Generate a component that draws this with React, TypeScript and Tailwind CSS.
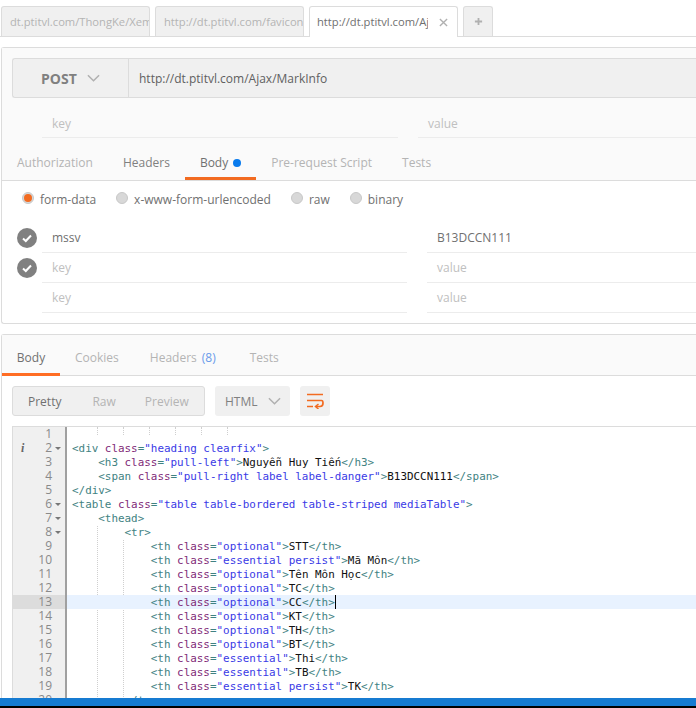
type Seg = [string, string];
const TAG = "text-[#3f8282]";
const ATTR = "text-[#7f2a78]";
const STR = "text-[#3a3ae6]";
const TXT = "text-[#111111]";

function th(cls: string, body: string): Seg[] {
  return [
    ["            ", TXT],
    ["<th", TAG],
    [" ", TXT],
    ["class", ATTR],
    ["=", TAG],
    [`"${cls}"`, STR],
    [">", TAG],
    [body, TXT],
    ["</th>", TAG],
  ];
}

const lines: Seg[][] = [
  [],
  [["<div", TAG], [" ", TXT], ["class", ATTR], ["=", TAG], ['"heading clearfix"', STR], [">", TAG]],
  [["    ", TXT], ["<h3", TAG], [" ", TXT], ["class", ATTR], ["=", TAG], ['"pull-left"', STR], [">", TAG], ["Nguyễn Huy Tiến", TXT], ["</h3>", TAG]],
  [["    ", TXT], ["<span", TAG], [" ", TXT], ["class", ATTR], ["=", TAG], ['"pull-right label label-danger"', STR], [">", TAG], ["B13DCCN111", TXT], ["</span>", TAG]],
  [["</div>", TAG]],
  [["<table", TAG], [" ", TXT], ["class", ATTR], ["=", TAG], ['"table table-bordered table-striped mediaTable"', STR], [">", TAG]],
  [["    ", TXT], ["<thead>", TAG]],
  [["        ", TXT], ["<tr>", TAG]],
  th("optional", "STT"),
  th("essential persist", "Mã Môn"),
  th("optional", "Tên Môn Học"),
  th("optional", "TC"),
  th("optional", "CC"),
  th("optional", "KT"),
  th("optional", "TH"),
  th("optional", "BT"),
  th("essential", "Thi"),
  th("essential", "TB"),
  th("essential persist", "TK"),
  [["        ", TXT], ["</tr>", TAG]],
];

const fold = new Set([2, 6, 7, 8]);

function Check() {
  return (
    <svg viewBox="0 0 20 20" className="w-5 h-5 shrink-0">
      <circle cx="10" cy="10" r="10" fill="#808080" />
      <path d="M6 10.5 L8.8 13 L14 7.5" fill="none" stroke="#fff" strokeWidth="2" />
    </svg>
  );
}

function Chevron({ color }: { color: string }) {
  return (
    <svg viewBox="0 0 14 8" className="w-[13px] h-[8px]">
      <path d="M1 1 L7 7 L13 1" fill="none" stroke={color} strokeWidth="1.6" />
    </svg>
  );
}

function KvRow({ k, v, filled, check }: { k: string; v: string; filled?: boolean; check?: boolean }) {
  const c = filled ? "text-[#707070]" : "text-[#c0c0c0]";
  return (
    <div className="flex h-[30px] pl-[15px]">
      <div className="w-5 shrink-0 flex items-center pb-[1px]">{check && <Check />}</div>
      <div className={`ml-[5px] w-[365px] shrink-0 border-b border-[#ececec] pl-[10px] flex items-center text-[12px] ${c}`}>{k}</div>
      <div className={`ml-[20px] flex-1 border-b border-[#ececec] pl-[10px] flex items-center text-[12px] ${c}`}>{v}</div>
    </div>
  );
}

function Radio({ label, on }: { label: string; on?: boolean }) {
  return (
    <div className="flex items-center gap-[6px]">
      <span className="w-3 h-3 rounded-full bg-[#d8d8d8] border border-[#c8c8c8] flex items-center justify-center -mt-[3px]">
        {on && <span className="w-[8px] h-[8px] rounded-full bg-[#f26b21]" />}
      </span>
      <span className="text-[12px] text-[#707070] pt-[1px]">{label}</span>
    </div>
  );
}

export default function App() {
  return (
    <div className="relative w-[696px] h-[708px] overflow-hidden bg-white font-[Open_Sans]">
      <div className="flex items-end h-[37px] pt-[6px] pl-[1px] gap-[5px] border-b border-[#dcdcdc]">
        {["dt.ptitvl.com/ThongKe/Xem", "http://dt.ptitvl.com/favicon."].map((t, i) => (
          <div key={i} className="w-[149px] h-[30px] rounded-t-[3px] border border-b-0 border-[#dcdcdc] bg-[#f0f0f0] pl-[8px] pt-[2px] flex items-center text-[11.2px] text-[#b4b4b4] whitespace-nowrap overflow-hidden">{t}</div>
        ))}
        <div className="w-[149px] h-[31px] -mb-[1px] rounded-t-[3px] border border-b-0 border-[#dcdcdc] bg-white pl-[7px] pt-[1px] flex items-center justify-between text-[11.2px] text-[#707070] whitespace-nowrap">
          <span className="w-[111px] overflow-hidden">http://dt.ptitvl.com/Aj</span>
          <svg viewBox="0 0 10 10" className="w-[9px] h-[9px] mr-[9px]"><path d="M1 1 L9 9 M9 1 L1 9" stroke="#b0b0b0" strokeWidth="1.5" /></svg>
        </div>
        <div className="w-[30px] h-[30px] rounded-t-[3px] border border-b-0 border-[#dcdcdc] bg-[#f0f0f0] flex items-center justify-center text-[#b0b0b0]">
          <svg viewBox="0 0 10 10" className="w-[9px] h-[9px]"><path d="M5 1 V9 M1 5 H9" stroke="#b0b0b0" strokeWidth="2" /></svg>
        </div>
      </div>

      <div className="ml-[1px] mt-[10px] h-[277px] rounded-l-[3px] border border-r-0 border-[#dcdcdc]">
        <div className="h-[133px] bg-[#fafafa] border-b border-[#dcdcdc] pt-[10px] pl-[10px]">
          <div className="flex h-[40px] rounded-l-[3px] border border-r-0 border-[#dcdcdc] bg-[#f0f0f0]">
            <div className="w-[116px] shrink-0 border-r border-[#dcdcdc] flex items-center pl-[28px] gap-[10px]">
              <span className="text-[14px] font-bold text-[#808080]">POST</span>
              <Chevron color="#b0b0b0" />
            </div>
            <div className="flex items-center pl-[10px] pt-[2px] text-[12px] text-[#606060]">http://dt.ptitvl.com/Ajax/MarkInfo</div>
          </div>
          <div className="flex h-[30px] mt-[10px] pl-[30px]">
            <div className="w-[356px] shrink-0 border-b border-[#ececec] pl-[10px] pt-[2px] flex items-center text-[12px] text-[#c0c0c0]">key</div>
            <div className="ml-[20px] flex-1 border-b border-[#ececec] pl-[10px] pt-[2px] flex items-center text-[12px] text-[#c0c0c0]">value</div>
          </div>
          <div className="flex items-center h-[36px] mt-[6px] -ml-[10px]">
            <div className="h-full flex items-center px-[15px] pt-[2px] text-[12px] text-[#b4b4b4]">Authorization</div>
            <div className="h-full flex items-center px-[15px] pt-[2px] text-[12px] text-[#808080]">Headers</div>
            <div className="h-full flex items-center px-[15px] gap-[5px] text-[12px] text-[#707070] border-b-[3px] border-[#f26b21] pt-[5px]">
              Body<span className="w-2 h-2 rounded-full bg-[#097bed]" />
            </div>
            <div className="h-full flex items-center px-[15px] pt-[2px] text-[12px] text-[#b4b4b4]">Pre-request Script</div>
            <div className="h-full flex items-center px-[15px] pt-[2px] text-[12px] text-[#b4b4b4]">Tests</div>
          </div>
        </div>
        <div className="flex items-center gap-[20px] h-[36px] pl-[20px]">
          <Radio label="form-data" on />
          <Radio label="x-www-form-urlencoded" />
          <Radio label="raw" />
          <Radio label="binary" />
        </div>
        <div className="mt-[6px]">
          <KvRow k="mssv" v="B13DCCN111" filled check />
          <KvRow k="key" v="value" check />
          <KvRow k="key" v="value" />
        </div>
      </div>

      <div className="ml-[1px] mt-[10px] h-[374px] border-l border-t border-[#dcdcdc] rounded-tl-[3px]">
        <div className="flex h-[41px] bg-[#fafafa] border-b border-[#dcdcdc] pt-[6px]">
          <div className="w-[58px] -mt-[6px] pt-[7px] flex items-center justify-center text-[12px] text-[#707070] border-b-[3px] border-[#ff6d24] h-[41px]">Body</div>
          <div className="flex items-center ml-[15px] text-[12px] text-[#b4b4b4]">Cookies</div>
          <div className="flex items-center ml-[31px] text-[12px] text-[#b4b4b4]">Headers<span className="ml-[5px] text-[#6a9bea]">(8)</span></div>
          <div className="flex items-center ml-[34px] text-[12px] text-[#b4b4b4]">Tests</div>
        </div>
        <div className="flex h-[30px] mt-[10px] ml-[10px] gap-[10px]">
          <div className="w-[193px] rounded-[3px] border border-[#dcdcdc] bg-[#f0f0f0] pt-[2px] flex items-center text-[12px] text-[#b4b4b4] pl-[15px]">
            <span className="text-[#707070]">Pretty</span>
            <span className="ml-[31px]">Raw</span>
            <span className="ml-[29px]">Preview</span>
          </div>
          <div className="w-[75px] rounded-[3px] bg-[#f0f0f0] flex items-center pl-[10px] gap-[10px] text-[12px] text-[#808080]">
            <span className="pt-[2px]">HTML</span><Chevron color="#b0b0b0" />
          </div>
          <div className="w-[30px] rounded-[3px] bg-[#f0f0f0] flex items-center justify-center">
            <svg viewBox="0 0 18 16" className="w-[18px] h-[16px]">
              <path d="M1 1.5 H17 M1 7.5 H15.5 Q17 7.5 17 10 Q17 13.5 14 13.5 H10 M1 13.5 H7" fill="none" stroke="#f26b21" strokeWidth="1.7" />
              <path d="M12.5 11 L9.5 13.5 L12.5 16" fill="none" stroke="#f26b21" strokeWidth="1.5" />
            </svg>
          </div>
        </div>
        <div className="flex mt-[10px] ml-[10px] border-t border-l border-[#dcdcdc] h-[272px] overflow-hidden">
          <div className="w-[52px] shrink-0 bg-[#f0f0f0] border-r-2 border-[#a0a0a0] box-content">
            {lines.map((_, i) => (
              <div key={i} className={`relative h-[14px] leading-[14px] text-right pr-[13px] text-[#8a8a8a] text-[12px] ${i === 12 ? "bg-[#dcdcdc]" : ""}`}>
                {i === 1 && <span className="absolute left-[8px] top-0 italic font-bold font-[Liberation_Serif] text-[#666666]">i</span>}
                {i + 1}
                {fold.has(i + 1) && <span className="absolute right-[4px] top-[6px] w-0 h-0 border-x-[3px] border-x-transparent border-t-[3px] border-t-[#777777]" />}
              </div>
            ))}
          </div>
          <div className="relative flex-1 font-[DejaVu_Sans_Mono] text-[10.92px] leading-[14px]">
            {[30, 56, 82, 108, 134, 160].map((x) => (
              <div key={x} className="absolute top-0 w-0 h-[8px] border-l border-dotted border-[#cfcfcf]" style={{ left: x }} />
            ))}
            <div className="absolute top-[99px] left-[30px] h-[173px] w-0 border-l border-dotted border-[#cfcfcf]" />
            <div className="absolute top-[113px] left-[56px] h-[159px] w-0 border-l border-dotted border-[#cfcfcf]" />
            {lines.map((segs, i) => (
              <div key={i} className={`relative h-[14px] pl-[5px] pt-[1px] whitespace-pre ${i === 12 ? "bg-[#e8f2ff]" : ""}`}>
                {segs.map(([t, c], j) => <span key={j} className={c}>{t}</span>)}
                {i === 12 && <span className="inline-block align-top w-[1.5px] h-[14px] -mt-[1px] bg-black" />}
              </div>
            ))}
          </div>
        </div>
      </div>

      <div className="absolute left-0 right-0 top-[698px] h-[8px] bg-[#167bd1]" />
      <div className="absolute left-0 right-0 top-[706px] h-[2px] bg-black" />
    </div>
  );
}
